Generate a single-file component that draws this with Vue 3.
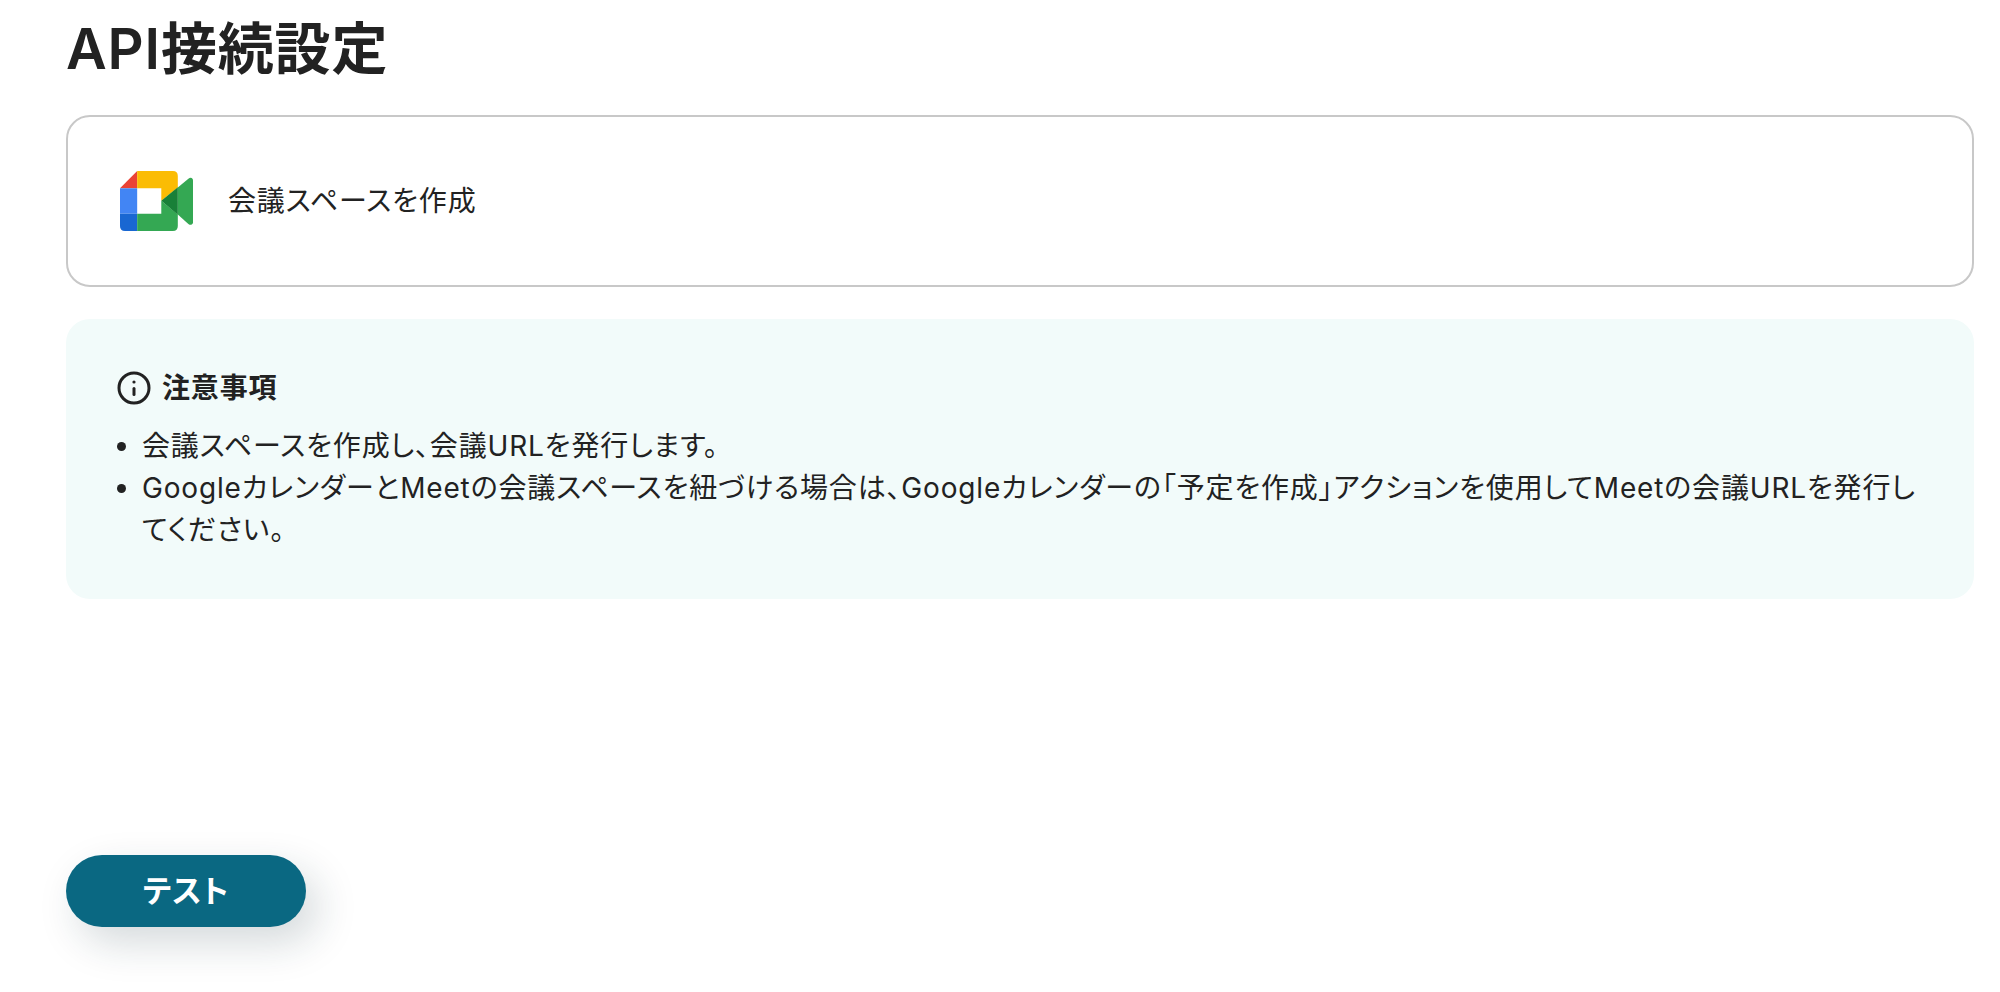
<script setup>
const action = '会議スペースを作成'
const notes = [
  '会議スペースを作成し、会議URLを発行します。',
  'GoogleカレンダーとMeetの会議スペースを紐づける場合は、Googleカレンダーの「予定を作成」アクションを使用してMeetの会議URLを発行してください。',
]
</script>

<template>
  <main class="page">
    <h1 class="title">API接続設定</h1>

    <section class="card">
      <svg class="logo" viewBox="0 0 221 181" aria-hidden="true">
        <path fill="#ea4335" d="M52 0v52H0z" />
        <path fill="#fbbc04" d="M52 0h108q15 0 15 15v35l-50 40V52H52z" />
        <path fill="#4285f4" d="M0 52h52v77H0z" />
        <path fill="#1967d2" d="M0 129h52v52H15q-15 0-15-15z" />
        <path fill="#34a853" d="M52 129h73V90l50 41v35q0 15-15 15H52z" />
        <path fill="#34a853" d="M175 50l32-27q5-4 10-2 4 2 4 7v127q0 5-4 7-5 2-10-2l-32-29z" />
        <path fill="#188038" d="M125 90l50-41v83z" />
      </svg>
      <span class="text">{{ action }}</span>
    </section>

    <section class="notice">
      <h2 class="notice-title">
        <svg class="info" viewBox="0 0 40 40" fill="none" stroke="#222" aria-hidden="true">
          <circle cx="20" cy="20" r="15" stroke-width="3" />
          <path d="M20 20.5v6" stroke-width="3" stroke-linecap="round" />
          <circle cx="20" cy="14" r="1.6" fill="#222" stroke="none" />
        </svg>
        注意事項
      </h2>
      <ul class="notes">
        <li v-for="note in notes" :key="note">{{ note }}</li>
      </ul>
    </section>

    <button class="test" type="button">テスト</button>
  </main>
</template>

<style>
body {
  margin: 0;
  background: #fff;
}
</style>

<style scoped>
.page {
  display: flex;
  flex-direction: column;
  padding: 8px 26px 64px 66px;
  color: #222;
  font-family: Inter, "Noto Sans CJK JP", sans-serif;
  font-size: 28px;
  line-height: 42px;
  font-feature-settings: "palt";
  letter-spacing: 0.03em;
}
.title {
  margin: 0 0 24px;
  font-size: 56px;
  line-height: 83px;
  font-weight: 600;
  letter-spacing: 0.015em;
}
.card {
  display: flex;
  align-items: center;
  gap: 35px;
  box-sizing: border-box;
  min-height: 172px;
  padding: 48px 52px;
  border: 2px solid #c8c8c8;
  border-radius: 24px;
}
.logo {
  flex: none;
  width: 73px;
  height: 60px;
}
.notice {
  margin-top: 32px;
  padding: 48px;
  border-radius: 24px;
  background: #f2fbfa;
}
.notice-title {
  display: flex;
  align-items: center;
  gap: 8px;
  margin: 0 0 16px;
  font-size: 28px;
  font-weight: 600;
}
.info {
  flex: none;
  width: 40px;
  height: 40px;
}
.notes {
  margin: 0;
  padding-left: 28px;
}
.test {
  align-self: flex-start;
  width: 240px;
  height: 72px;
  margin-top: 256px;
  border: 0;
  border-radius: 36px;
  background: #0a6882;
  color: #fff;
  font: inherit;
  font-size: 31px;
  font-weight: 600;
  letter-spacing: inherit;
  font-feature-settings: inherit;
  box-shadow: 12px 16px 40px rgba(20, 50, 60, 0.18);
}
</style>
